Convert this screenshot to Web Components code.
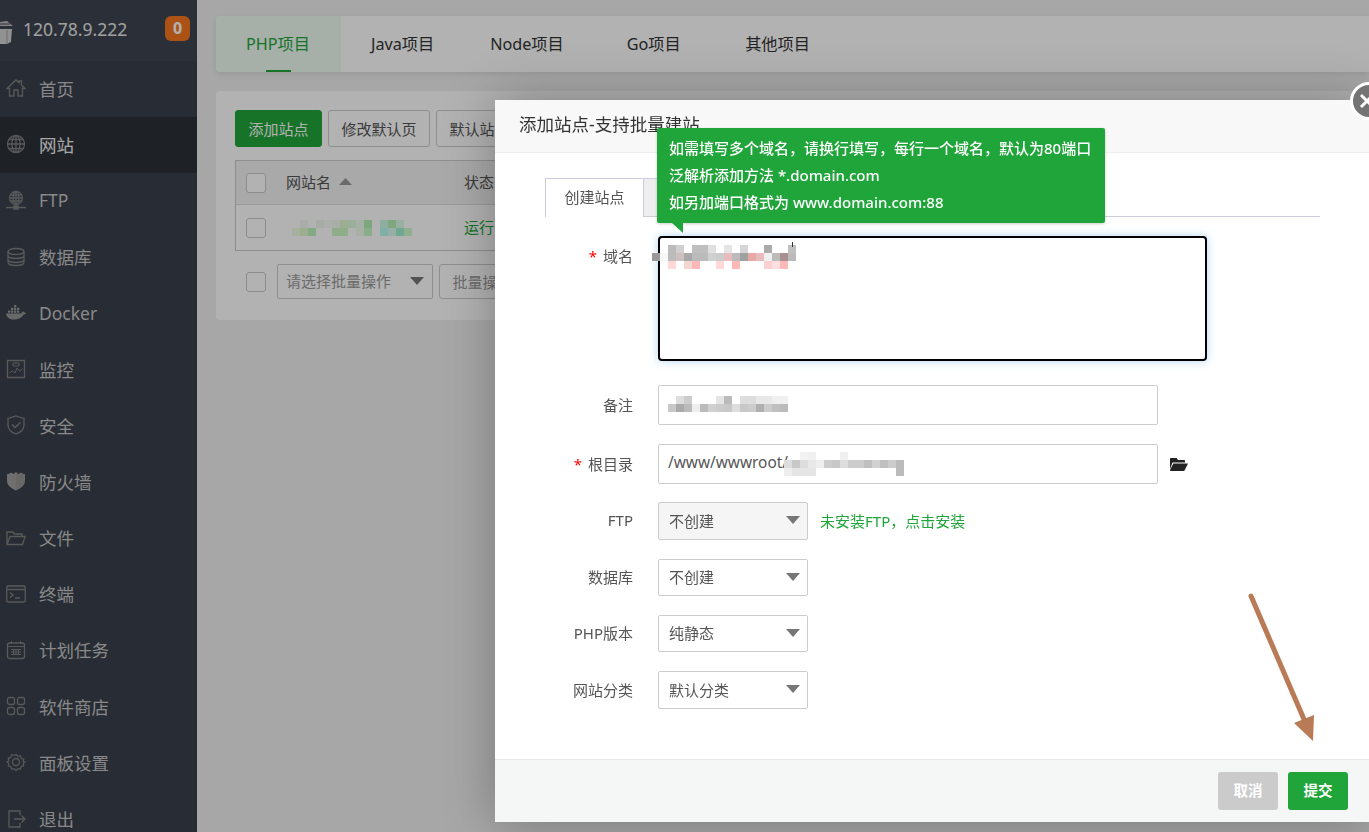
<!DOCTYPE html>
<html lang="zh">
<head>
<meta charset="utf-8">
<title>添加站点</title>
<style>
  html, body { margin: 0; height: 832px; overflow: hidden; }
  body { font-family: "Noto Sans", "Noto Sans CJK SC", sans-serif; font-size: 15px; color: #555; background: #f0f0f0; }
</style>
</head>
<body>
<app-shell>
  <side-bar slot="side">
    <nav-item label="首页"><svg viewBox="0 0 20 20"><path d="M1 10.5 10 2l3 2.8V3h2.5v4.2l3.5 3.3h-2.5V18H12v-6H8v6H3.5v-7.500z"/></svg></nav-item>
    <nav-item label="网站" active><svg viewBox="0 0 20 20"><circle cx="10" cy="10" r="8.500"/><ellipse cx="10" cy="10" rx="4" ry="8.500"/><path d="M10 1.500v17M1.500 10h17M3 5.500h14M3 14.500h14"/></svg></nav-item>
    <nav-item label="FTP"><svg viewBox="0 0 20 20"><circle cx="10" cy="8" r="6.500"/><ellipse cx="10" cy="8" rx="3" ry="6.500"/><path d="M10 1.500v13M3.500 8h13M4.500 5h11M4.500 11h11M0 17.500h20M8 16h4v3H8z"/></svg></nav-item>
    <nav-item label="数据库"><svg viewBox="0 0 20 20"><ellipse cx="10" cy="4.500" rx="8" ry="3"/><path d="M2 4.500v11c0 1.700 3.600 3 8 3s8-1.300 8-3v-11M2 8.500c0 1.700 3.600 3 8 3s8-1.300 8-3M2 12.500c0 1.700 3.600 3 8 3s8-1.300 8-3"/></svg></nav-item>
    <nav-item label="Docker"><svg viewBox="0 0 20 20" class="solid"><path d="M0 10.500h14.500c.8 0 1.500-.6 1.700-2 .8 0 1.800.6 2 1.100.6-.1 1.300 0 1.800.3-.6 1.200-1.500 1.600-2.500 1.600C16 15 12.500 16.500 7.500 16.500 3 16.500.5 14 0 10.500z"/><path d="M2 7.500h2.300v2.300H2zM5 7.500h2.300v2.300H5zM8 7.500h2.300v2.300H8zM11 7.500h2.300v2.300H11zM5 4.700h2.300V7H5zM8 4.700h2.300V7H8zM11 4.700h2.300V7H11zM8 2h2.300v2.200H8z"/></svg></nav-item>
    <nav-item label="监控"><svg viewBox="0 0 20 20"><path d="M1.500 1.500h17v17h-17z"/><path d="M3.500 14l3-2 2.500 2 2-5 2.500 3 3-2M7 4h6v3H7z" stroke-width="1"/></svg></nav-item>
    <nav-item label="安全"><svg viewBox="0 0 20 20"><path d="M10 1 18 3.500V10c0 4.500-3.800 7.500-8 9-4.200-1.500-8-4.500-8-9V3.500z"/><path d="m6 9.500 3 3 5.500-5" stroke-width="1.600"/></svg></nav-item>
    <nav-item label="防火墙"><svg viewBox="0 0 20 20" class="solid"><path d="M10 1 7.500 3 5 1.500 2.500 3H1v7c0 4.500 4.500 7.500 9 9.500z" fill="#a0a0a0"/><path d="M10 1l2.500 2L15 1.500 17.500 3H19v7c0 4.500-4.500 7.500-9 9.500z"/></svg></nav-item>
    <nav-item label="文件"><svg viewBox="0 0 20 20"><path d="M1 16.500V4h6l1.500 2H16v2.500M1 16.500h15.500L19 8.500H4z"/></svg></nav-item>
    <nav-item label="终端"><svg viewBox="0 0 20 20"><rect x="0.750" y="2" width="18.500" height="16" rx="1.500"/><path d="M1 5.500h18M4 8.500l3 2.500-3 2.500M9 14h5" stroke-width="1.400"/></svg></nav-item>
    <nav-item label="计划任务"><svg viewBox="0 0 20 20"><rect x="1.500" y="3" width="17" height="15.500" rx="2"/><path d="M5.500 1v3M14.500 1v3M1.500 6.500h17M5 9.500h10M5 12h10M5 14.500h10M7.500 9v6M10 9v6M12.500 9v6" stroke-width="1"/></svg></nav-item>
    <nav-item label="软件商店"><svg viewBox="0 0 20 20"><rect x="1.500" y="1.500" width="7" height="7" rx="2"/><rect x="11.500" y="1.500" width="7" height="7" rx="2"/><rect x="1.500" y="11.500" width="7" height="7" rx="2"/><rect x="11.500" y="11.500" width="7" height="7" rx="2"/></svg></nav-item>
    <nav-item label="面板设置"><svg viewBox="0 0 20 20"><path d="M10 1.500l2 2.200 2.900-.6.900 2.800 2.800.9-.6 2.900L20 10l-2 1.300.6 2.900-2.800.9-.9 2.800-2.900-.6-2 2.200-2-2.200-2.900.6-.9-2.800-2.800-.9.6-2.900L0 10l2-1.300-.6-2.900 2.800-.9.9-2.800 2.900.6z" transform="translate(1 1) scale(.9)"/><circle cx="10" cy="10" r="3.500"/></svg></nav-item>
    <nav-item label="退出"><svg viewBox="0 0 20 20"><path d="M14 6V2H3v16h11v-4M8 10h11M15.500 6.500 19 10l-3.500 3.500"/></svg></nav-item>
  </side-bar>
  <project-tabs slot="main"></project-tabs>
  <site-panel slot="main"></site-panel>
</app-shell>
<page-mask></page-mask>
<add-site-dialog></add-site-dialog>
<arrow-note></arrow-note>

<script>
const FONT = `"Noto Sans", "Noto Sans CJK SC", sans-serif`;

// shared little down/up triangle
const caret = (w, h, color, up) =>
  `<svg width="${w}" height="${h}" viewBox="0 0 ${w} ${h}" style="flex:none;display:block"><path d="${up ? `M0 ${h}L${w / 2} 0L${w} ${h}Z` : `M0 0L${w} 0L${w / 2} ${h}Z`}" fill="${color}"/></svg>`;

class Base extends HTMLElement {
  constructor(html) {
    super();
    this.attachShadow({ mode: "open" });
    this.shadowRoot.innerHTML = html;
  }
}

class AppShell extends Base {
  constructor() {
    super(`
      <style>
        :host { display: flex; width: 1369px; height: 832px; overflow: hidden; }
        main { flex: 1; min-width: 0; padding: 16px 0 0 19px; display: flex; flex-direction: column; gap: 19px; }
      </style>
      <slot name="side"></slot>
      <main><slot name="main"></slot></main>`);
  }
}

class SideBar extends Base {
  constructor() {
    super(`
      <style>
        :host { display: block; flex: none; width: 197px; height: 832px; background: #3a404b; overflow: hidden; }
        header { display: flex; align-items: center; height: 61px; background: #3e4551; box-sizing: border-box; padding: 0 7px 4px 0; }
        header svg { flex: none; width: 13px; height: 24px; margin: 6px 10px 0 0; }
        .ip { flex: 1; font-size: 17.500px; color: #e6e6e6; line-height: 24px; }
        .badge { width: 25px; height: 25px; border-radius: 6px; background: #f6761f; color: #fff; font: bold 16px/25px ${FONT}; text-align: center; }
      </style>
      <header>
        <svg viewBox="0 0 13 24"><path d="M0 2 7 1l6 5H0z" fill="#bdbdbd"/><path d="M0 4h10M0 6.500h12" stroke="#3e4551"/><path d="M0 9h12l-1 13-4 2H0z" fill="#d0d0d0"/><path d="M7 10v14" stroke="#9b9b9b"/></svg>
        <span class="ip">120.78.9.222</span>
        <span class="badge">0</span>
      </header>
      <slot></slot>`);
  }
}

class NavItem extends Base {
  constructor() {
    super(`
      <style>
        :host { display: flex; align-items: center; height: 56.200px; padding: 0 0 2px 6px; gap: 13px; box-sizing: border-box; color: #c4c4c4; font-size: 17.500px; }
        :host([active]) { background: #2c3037; color: #f0f0f0; }
        .ico { width: 20px; height: 20px; flex: none; display: block; }
        ::slotted(svg) { width: 20px; height: 20px; display: block; fill: none; stroke: #808080; stroke-width: 1.300; }
        ::slotted(svg.solid) { fill: #969696; stroke: none; }
      </style>
      <span class="ico"><slot></slot></span><span id="t"></span>`);
  }
  connectedCallback() {
    this.shadowRoot.getElementById("t").textContent = this.getAttribute("label");
  }
}

class ProjectTabs extends Base {
  constructor() {
    const tabs = [["PHP项目", 30, 31], ["Java项目", 30, 26], ["Node项目", 30, 33], ["Go项目", 30, 34.500], ["其他项目", 30, 30]];
    super(`
      <style>
        :host { display: flex; height: 56px; background: #fff; border-radius: 4px 0 0 4px; overflow: hidden; box-shadow: 0 2px 6px rgba(0,0,0,.1); font-size: 16.200px; color: #333; flex: none; }
        a { display: flex; align-items: center; position: relative; line-height: 56px; }
        a.on { background: #f0fbf3; color: #20a53a; }
        a.on::after { content: ""; position: absolute; left: 50px; bottom: 0; width: 25px; height: 2px; background: #20a53a; }
      </style>
      ${tabs.map(([t, l, r], i) => `<a class="${i ? "" : "on"}" style="padding:0 ${r}px 0 ${l}px">${t}</a>`).join("")}`);
  }
}

class PlainCheck extends Base {
  constructor() {
    super(`<style>:host { display: block; flex: none; width: 18px; height: 18px; border: 1px solid #c9c9c9; border-radius: 3px; background: #fff; }</style>`);
  }
}

class DropSelect extends Base {
  constructor() {
    super(`
      <style>
        :host { display: flex; align-items: center; justify-content: space-between; box-sizing: border-box; width: 150px; height: 38px; padding: 0 7px 0 10px; border: 1px solid #ccc; border-radius: 2px; background: #fff; color: #555; font-size: 15px; flex: none; }
        :host([disabled]) { background: #f5f5f5; }
        #t { margin-top: -2px; }
        svg { margin-top: -2px; }
      </style>
      <span id="t"></span>${caret(14, 8, "#777")}`);
  }
  connectedCallback() {
    this.shadowRoot.getElementById("t").textContent = this.getAttribute("text");
  }
}

// pixelated-out text: rows split by |, cells by spaces, "." stays empty
class MosaicBlur extends Base {
  constructor() {
    super(`<style>:host { display: block; } .r { display: flex; height: 8px; } .r i { width: 8px; flex: none; display: block; }</style><div id="m"></div>`);
  }
  connectedCallback() {
    const rows = this.getAttribute("cells").split("|");
    this.shadowRoot.getElementById("m").innerHTML = rows
      .map((r) => `<div class="r">${r.trim().split(/\s+/).map((c) => `<i style="background:${c === "." ? "transparent" : "#" + c}"></i>`).join("")}</div>`)
      .join("");
  }
}

class SitePanel extends Base {
  constructor() {
    super(`
      <style>
        :host { display: block; flex: none; box-sizing: border-box; height: 229px; padding: 19px 19px 0; background: #fff; border-radius: 4px 0 0 4px; font-size: 15px; color: #555; }
        .tools { display: flex; gap: 6px; height: 37px; }
        button { font: inherit; color: #555; background: #fff; border: 1px solid #ccc; border-radius: 3px; padding: 0 12.500px; height: 37px; white-space: nowrap; }
        button.go { background: #20a53a; border-color: #20a53a; color: #fff; }
        .tbl { margin-top: 13px; border: 1px solid #ccc; }
        .row { display: grid; grid-template-columns: 20px 178px 1fr; align-items: center; padding-left: 10px; }
        .row > :nth-child(2) { margin-left: 20px; }
        .head { height: 43px; background: #f2f2f2; border-bottom: 1px solid #ddd; }
        .body { height: 45px; }
        .sort { display: flex; align-items: center; gap: 8px; margin-top: -2px; }
        .state { margin-left: 20px; margin-top: -2px; }
        .ok { color: #20a53a; }
        .batch { display: flex; align-items: center; margin-top: 13px; padding-left: 11px; height: 35px; }
        .batch drop-select { width: 156px; height: 35px; margin-left: 11px; color: #999; padding: 0 8px 0 8px; }
        .batch button { margin-left: 6px; height: 35px; color: #999; }
        plain-check { box-sizing: content-box; }
      </style>
      <div class="tools">
        <button class="go">添加站点</button><button>修改默认页</button><button>默认站点</button><button>PHP命令行版本</button>
      </div>
      <div class="tbl">
        <div class="row head"><plain-check></plain-check><span class="sort">网站名 ${caret(13, 7, "#999", true)}</span><span class="state">状态</span></div>
        <div class="row body"><plain-check></plain-check><mosaic-blur style="margin-left:26px" cells=". f4f6f4 . f0f5ee f8fbf8 f4faf5 e0f8ce dcfbdc f0fcec b5f0b5 . ccfbe4 b5f0b7 dcfbe4 .|f0fbe4 e0f8ce bef4be . . ccf8c5 ccf8c5 . f0fcec c5f8c5 . b7fbf0 d8fbf0 9ff0ce cefbce"></mosaic-blur><span class="state ok">运行中</span></div>
      </div>
      <div class="batch"><plain-check></plain-check><drop-select text="请选择批量操作"></drop-select><button>批量操作</button></div>`);
  }
}

class PageMask extends Base {
  constructor() {
    super(`<style>:host { display: block; position: fixed; inset: 0; background: rgba(0,0,0,.3); }</style>`);
  }
}

class FormRow extends Base {
  constructor() {
    super(`
      <style>
        :host { display: grid; grid-template-columns: 138px 1fr; column-gap: 25px; align-items: center; color: #555; font-size: 15px; }
        :host([tall]) { align-items: start; }
        :host([tall]) .lab { line-height: 40px; margin-top: 0; }
        .lab { text-align: right; white-space: nowrap; margin-top: -2px; }
        .lab b { color: #f00; font-weight: normal; margin-right: 6px; }
        .field { display: flex; align-items: center; gap: 12px; }
      </style>
      <div class="lab"><b id="s"></b><span id="t"></span></div>
      <div class="field"><slot></slot></div>`);
  }
  connectedCallback() {
    this.shadowRoot.getElementById("t").textContent = this.getAttribute("label");
    this.shadowRoot.getElementById("s").textContent = this.hasAttribute("req") ? "*" : "";
  }
}

class TipBox extends Base {
  constructor() {
    super(`
      <style>
        :host { display: block; position: absolute; left: 162px; top: 28px; width: 448px; height: 95px; box-sizing: border-box; padding: 7px 12px; background: #20a53a; color: #fff; font-size: 15px; line-height: 27px; font-weight: 500; border-radius: 2px; box-shadow: 0 1px 3px rgba(0,0,0,.2); white-space: nowrap; }
        svg { position: absolute; left: 15px; top: 95px; display: block; }
      </style>
      <div>如需填写多个域名，请换行填写，每行一个域名，默认为80端口</div>
      <div>泛解析添加方法 *.domain.com</div>
      <div>如另加端口格式为 www.domain.com:88</div>
      <svg width="11" height="10" viewBox="0 0 11 10"><path d="M0 0H11V10Z" fill="#20a53a"/></svg>`);
  }
}

class AddSiteDialog extends Base {
  constructor() {
    super(`
      <style>
        :host { display: flex; flex-direction: column; position: absolute; left: 495px; top: 100px; width: 874px; height: 722px; background: #fff; box-shadow: 1px 1px 50px rgba(0,0,0,.3); font-size: 15px; color: #555; }
        .title { flex: none; height: 53px; box-sizing: border-box; padding-left: 24px; background: #f8f8f8; border-bottom: 1px solid #eee; font-size: 17.500px; line-height: 49px; color: #333; }
        .close { position: absolute; left: 855px; top: -18px; width: 38px; height: 38px; box-sizing: border-box; border: 3px solid #fff; border-radius: 50%; background: #747474; }
        .close svg { position: absolute; left: 5px; top: 8px; }
        .body { flex: 1; min-height: 0; }
        .tabs { display: flex; margin: 25px 0 0 50px; width: 775px; height: 39px; box-sizing: border-box; border-bottom: 1px solid #ccccda; }
        .tab { box-sizing: border-box; height: 39px; width: 99px; border: 1px solid #ccccda; border-bottom: 0; background: #fff; text-align: center; line-height: 37px; color: #555; }
        .tab.off { width: 60px; height: 38px; background: #eee; border-left: 0; }
        form { display: flex; flex-direction: column; gap: 19px; margin-top: 19px; }
        .area { position: relative; width: 549px; height: 125px; box-sizing: border-box; border: 2px solid #000; border-radius: 4px; background: #fff; box-shadow: 0 0 9px rgba(102,175,233,.5); margin-bottom: 5px; }
        .area mosaic-blur { position: absolute; left: -8px; top: 7px; }
        .area i { position: absolute; left: 132px; top: 4px; width: 1px; height: 5px; background: #333; }
        .inp { position: relative; width: 500px; height: 40px; box-sizing: border-box; border: 1px solid #ccc; border-radius: 2px; padding-left: 9px; line-height: 36px; color: #555; font-size: 15.400px; background: #fff; }
        .inp mosaic-blur { position: absolute; }
        .note { color: #20a53a; font-size: 15px; margin-top: -2px; }
        .folder { display: block; flex: none; }
        .foot { flex: none; height: 63px; box-sizing: border-box; display: flex; justify-content: flex-end; align-items: flex-start; gap: 10px; padding: 12px 21px 0 0; background: #f5f7f7; border-top: 1px solid #e8e8e8; }
        .foot button { width: 60px; height: 38px; border: 0; border-radius: 3px; font: bold 14.500px ${FONT}; color: #fff; background: #20a53a; padding: 0 0 3px; }
        .foot button.no { background: #cbcbcb; }
      </style>
      <div class="title">添加站点-支持批量建站</div>
      <div class="close"><svg width="24" height="16" viewBox="0 0 24 16"><path d="M3 2 15 14M15 2 3 14" stroke="#fff" stroke-width="3"/></svg></div>
      <div class="body">
        <div class="tabs"><div class="tab">创建站点</div><div class="tab off"></div></div>
        <form>
          <form-row label="域名" req tall>
            <div class="area">
              <mosaic-blur cells=". . bbb d0d0d0 . bfbfbf bfbfbf e0e0e0 . e5e5e5 . d5d5d5 . . aaa . . c0c0c0|999 f8f8f8 bbb ccc0c0 a8a8a8 bbb bbb d0d0d0 ccc e8bcbc bbb a0a0a0 e8a8a8 e8bcbc f0f0f0 bbb a89090 bbb|. . ffd8d8 . f4d8d0 ffb8b8 . . ffd8d8 . ffb8b8 . . . ffd0d0 ffe0e0 ffb8b8 ."></mosaic-blur>
              <i></i>
            </div>
          </form-row>
          <form-row label="备注">
            <div class="inp"><mosaic-blur style="left:9px;top:10px" cells=". ddd ccc . . . e5e5e5 bbb . ddd ddd e8e8e8 e8e8e8 f0f0f0 f0f0f0|c8c8c8 aaa bbb eee bbb d0d0d0 ccc c8c8c8 ddd c8c8c8 ccc b0b0b0 ccc c0c0c0 bbb"></mosaic-blur></div>
          </form-row>
          <form-row label="根目录" req>
            <div class="inp">/www/wwwroot/<mosaic-blur style="left:125px;top:7px" cells=". . f2f2f2 f0f0f0 . . . f0f0f0 . . . . . . . .|ddd c8c8c8 ddd e8e8e8 eee ccc c8c8c8 ddd ccc ccc c0c0c0 d0d0d0 c0c0c0 ccc bbb .|eee e5e5e5 e5e5e5 e5e5e5 . . . . . . . . . . bbb ."></mosaic-blur></div>
            <svg class="folder" width="18" height="14" viewBox="0 0 18 14"><path d="M2.500 5.500H15V4c0-.6-.4-1-1-1H8L6.700 1H1C.4 1 0 1.400 0 2v10zM3.300 6.500 0 13c0 .6.400 1 1 1h12.500c.5 0 .9-.2 1.200-.7L18 6.500z" fill="#222"/></svg>
          </form-row>
          <form-row label="FTP" style="margin-top:-1px">
            <drop-select text="不创建" disabled></drop-select><span class="note">未安装FTP，点击安装</span>
          </form-row>
          <form-row label="数据库"><drop-select text="不创建" style="height:37px"></drop-select></form-row>
          <form-row label="PHP版本"><drop-select text="纯静态" style="height:37px"></drop-select></form-row>
          <form-row label="网站分类"><drop-select text="默认分类"></drop-select></form-row>
        </form>
      </div>
      <div class="foot"><button class="no">取消</button><button>提交</button></div>
      <tip-box></tip-box>`);
  }
}

class ArrowNote extends Base {
  constructor() {
    super(`
      <style>:host { display: block; position: absolute; left: 1240px; top: 585px; width: 90px; height: 165px; } svg { display: block; }</style>
      <svg width="90" height="165" viewBox="1240 585 90 165"><path d="M1251 596 1306 724" stroke="#b97a56" stroke-width="5" stroke-linecap="round" fill="none"/><path d="M1294 723 1314 715 1313 741Z" fill="#b97a56"/></svg>`);
  }
}

// children first, so the markup inside shadow roots upgrades as it is parsed
customElements.define("plain-check", PlainCheck);
customElements.define("drop-select", DropSelect);
customElements.define("mosaic-blur", MosaicBlur);
customElements.define("form-row", FormRow);
customElements.define("tip-box", TipBox);
customElements.define("nav-item", NavItem);
customElements.define("side-bar", SideBar);
customElements.define("project-tabs", ProjectTabs);
customElements.define("site-panel", SitePanel);
customElements.define("page-mask", PageMask);
customElements.define("add-site-dialog", AddSiteDialog);
customElements.define("arrow-note", ArrowNote);
customElements.define("app-shell", AppShell);
</script>
</body>
</html>
